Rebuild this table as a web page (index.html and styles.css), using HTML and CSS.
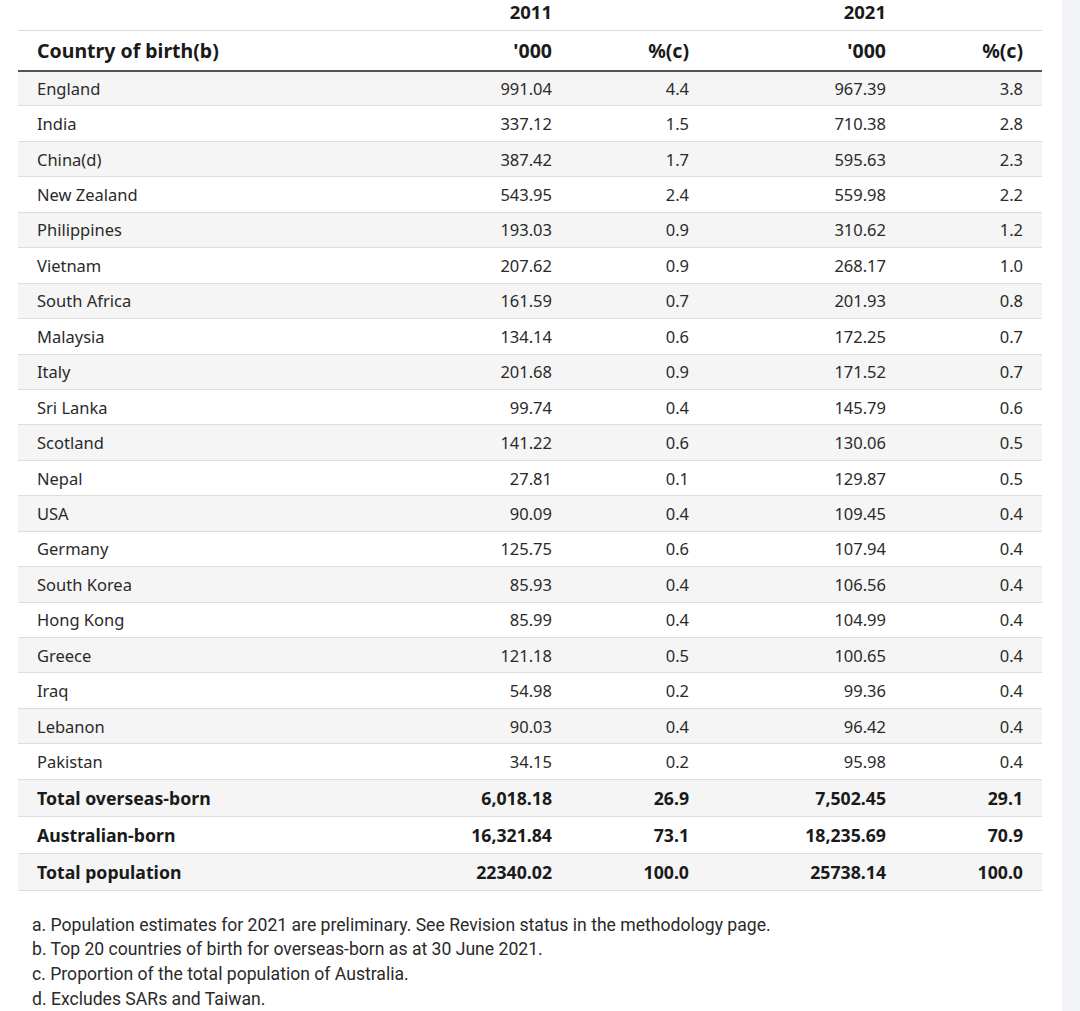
FILE: index.html
```html
<!DOCTYPE html>
<html>
<head>
<meta charset="utf-8">
<link rel="stylesheet" href="styles.css">
</head>
<body>
<div class="page">
  <div class="content">
    <table class="data">
      <colgroup>
        <col class="c1"><col class="c2"><col class="c3"><col class="c4"><col class="c5">
      </colgroup>
      <thead>
        <tr class="years">
          <th></th><th class="num">2011</th><th></th><th class="num">2021</th><th></th>
        </tr>
        <tr class="heads">
          <th class="name">Country of birth(b)</th>
          <th class="num">'000</th><th class="num">%(c)</th>
          <th class="num">'000</th><th class="num">%(c)</th>
        </tr>
      </thead>
      <tbody>
        <tr><td>England</td><td class="num">991.04</td><td class="num">4.4</td><td class="num">967.39</td><td class="num">3.8</td></tr>
        <tr><td>India</td><td class="num">337.12</td><td class="num">1.5</td><td class="num">710.38</td><td class="num">2.8</td></tr>
        <tr><td>China(d)</td><td class="num">387.42</td><td class="num">1.7</td><td class="num">595.63</td><td class="num">2.3</td></tr>
        <tr><td>New Zealand</td><td class="num">543.95</td><td class="num">2.4</td><td class="num">559.98</td><td class="num">2.2</td></tr>
        <tr><td>Philippines</td><td class="num">193.03</td><td class="num">0.9</td><td class="num">310.62</td><td class="num">1.2</td></tr>
        <tr><td>Vietnam</td><td class="num">207.62</td><td class="num">0.9</td><td class="num">268.17</td><td class="num">1.0</td></tr>
        <tr><td>South Africa</td><td class="num">161.59</td><td class="num">0.7</td><td class="num">201.93</td><td class="num">0.8</td></tr>
        <tr><td>Malaysia</td><td class="num">134.14</td><td class="num">0.6</td><td class="num">172.25</td><td class="num">0.7</td></tr>
        <tr><td>Italy</td><td class="num">201.68</td><td class="num">0.9</td><td class="num">171.52</td><td class="num">0.7</td></tr>
        <tr><td>Sri Lanka</td><td class="num">99.74</td><td class="num">0.4</td><td class="num">145.79</td><td class="num">0.6</td></tr>
        <tr><td>Scotland</td><td class="num">141.22</td><td class="num">0.6</td><td class="num">130.06</td><td class="num">0.5</td></tr>
        <tr><td>Nepal</td><td class="num">27.81</td><td class="num">0.1</td><td class="num">129.87</td><td class="num">0.5</td></tr>
        <tr><td>USA</td><td class="num">90.09</td><td class="num">0.4</td><td class="num">109.45</td><td class="num">0.4</td></tr>
        <tr><td>Germany</td><td class="num">125.75</td><td class="num">0.6</td><td class="num">107.94</td><td class="num">0.4</td></tr>
        <tr><td>South Korea</td><td class="num">85.93</td><td class="num">0.4</td><td class="num">106.56</td><td class="num">0.4</td></tr>
        <tr><td>Hong Kong</td><td class="num">85.99</td><td class="num">0.4</td><td class="num">104.99</td><td class="num">0.4</td></tr>
        <tr><td>Greece</td><td class="num">121.18</td><td class="num">0.5</td><td class="num">100.65</td><td class="num">0.4</td></tr>
        <tr><td>Iraq</td><td class="num">54.98</td><td class="num">0.2</td><td class="num">99.36</td><td class="num">0.4</td></tr>
        <tr><td>Lebanon</td><td class="num">90.03</td><td class="num">0.4</td><td class="num">96.42</td><td class="num">0.4</td></tr>
        <tr><td>Pakistan</td><td class="num">34.15</td><td class="num">0.2</td><td class="num">95.98</td><td class="num">0.4</td></tr>
        <tr class="total"><td>Total overseas-born</td><td class="num">6,018.18</td><td class="num">26.9</td><td class="num">7,502.45</td><td class="num">29.1</td></tr>
        <tr class="total"><td>Australian-born</td><td class="num">16,321.84</td><td class="num">73.1</td><td class="num">18,235.69</td><td class="num">70.9</td></tr>
        <tr class="total"><td>Total population</td><td class="num">22340.02</td><td class="num">100.0</td><td class="num">25738.14</td><td class="num">100.0</td></tr>
      </tbody>
    </table>
    <ol class="notes">
      <li>a. Population estimates for 2021 are preliminary. See Revision status in the methodology page.</li>
      <li>b. Top 20 countries of birth for overseas-born as at 30 June 2021.</li>
      <li>c. Proportion of the total population of Australia.</li>
      <li>d. Excludes SARs and Taiwan.</li>
    </ol>
  </div>
  <div class="rail"></div>
</div>
</body>
</html>
```
FILE: styles.css
```css
html, body {
  margin: 0;
  padding: 0;
  background: #ffffff;
}
body {
  font-family: "Noto Sans", "Open Sans", sans-serif;
  color: #222222;
}
.page {
  display: flex;
  width: 1080px;
  height: 1011px;
  overflow: hidden;
}
.content {
  width: 1062px;
  flex: none;
  padding: 0 20px 0 18px;
  box-sizing: border-box;
}
.rail {
  flex: 1;
  background: #f3f4f7;
}
.data {
  width: 1024px;
  border-collapse: collapse;
  table-layout: fixed;
}
.c1 { width: 356px; }
.c2 { width: 197px; }
.c3 { width: 137px; }
.c4 { width: 197px; }
.c5 { width: 137px; }
th, td {
  padding: 0 19px;
  text-align: left;
  white-space: nowrap;
}
.num { text-align: right; }
.years th {
  height: 30px;
  padding-top: 0;
  padding-bottom: 6px;
  box-sizing: border-box;
  line-height: 24px;
  font-size: 18.5px;
  font-weight: 700;
  color: #1a1a1a;
  vertical-align: bottom;
}
.heads th {
  height: 40px;
  box-sizing: border-box;
  border-top: 1px solid #dcdcdc;
  border-bottom: 2px solid #555555;
  font-size: 19.5px;
  font-weight: 700;
  color: #1a1a1a;
  vertical-align: middle;
}
tbody td {
  height: 35.45px;
  box-sizing: border-box;
  border-bottom: 1px solid #dedede;
  font-size: 16.5px;
  color: #2a2a2a;
  vertical-align: middle;
}
tbody tr:nth-child(odd) td {
  background: #f5f5f5;
}
tbody tr.total td {
  height: 37px;
  font-size: 17.7px;
  font-weight: 700;
  color: #1a1a1a;
}
.notes {
  list-style: none;
  margin: 22px 0 0;
  padding: 0 0 0 14px;
  font-family: "Roboto", "Noto Sans", sans-serif;
  font-size: 17.6px;
  line-height: 24.6px;
  color: #2a2a2a;
}
```
